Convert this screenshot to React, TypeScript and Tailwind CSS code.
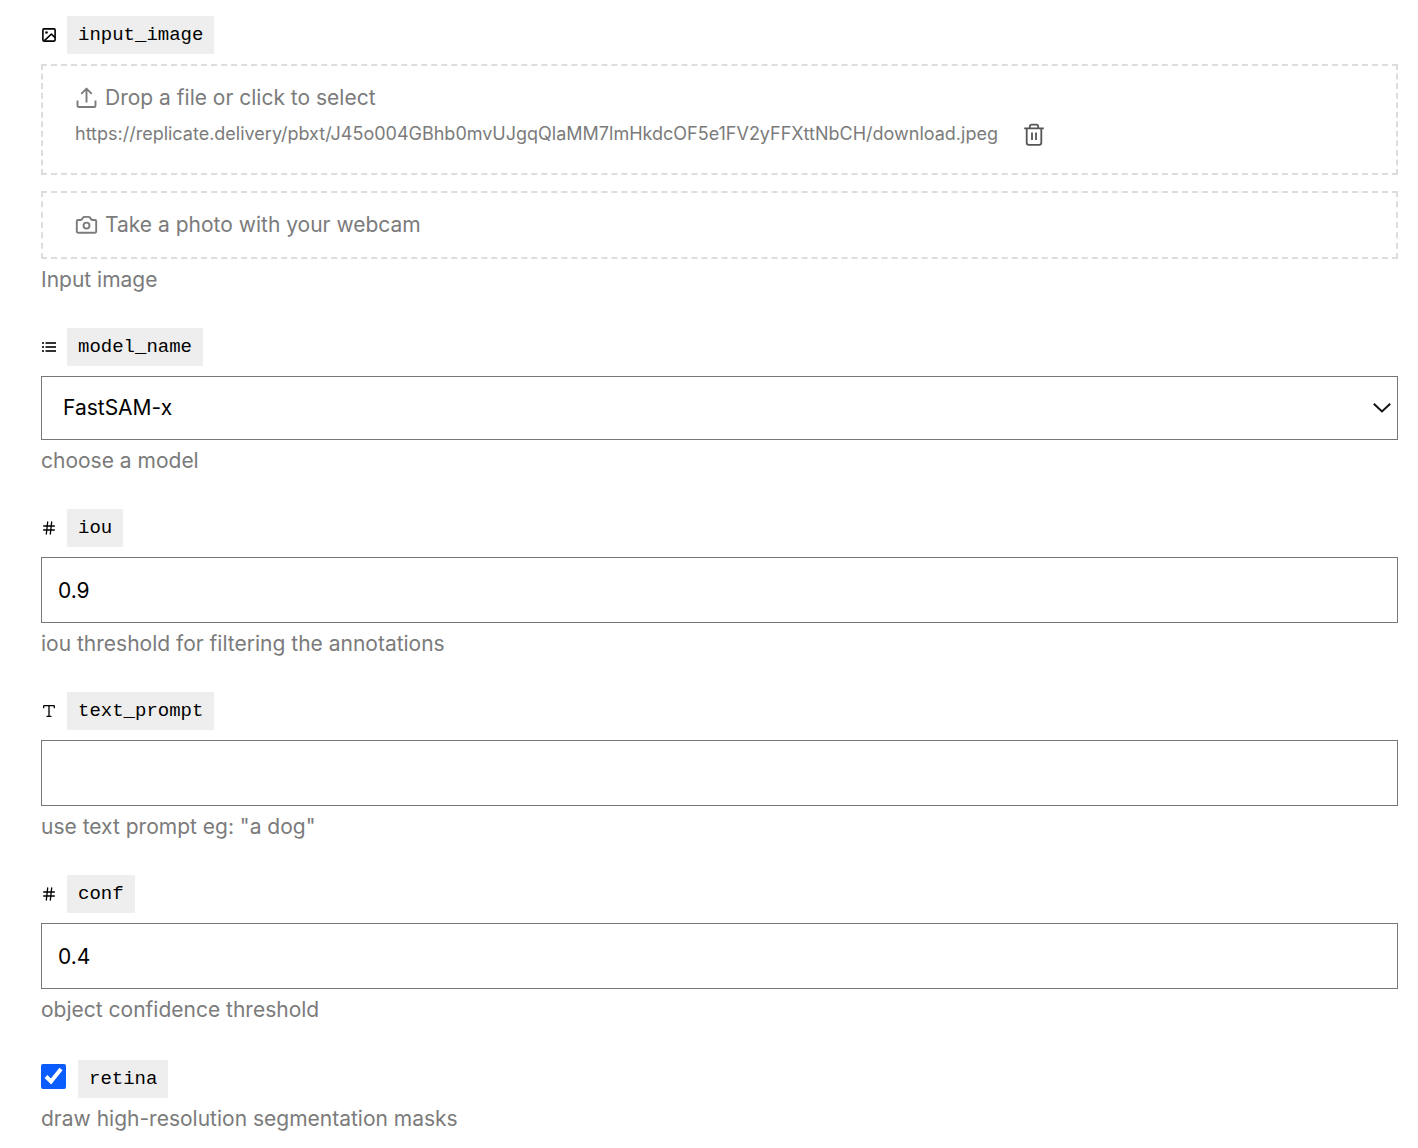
import { useState } from "react";
import type { ReactNode } from "react";
import { Hash, Type } from "lucide-react";

function ImageIcon() {
  return (
    <svg className="size-4 text-black" viewBox="0 0 16 16" fill="none" stroke="currentColor" strokeWidth="1.6" strokeLinejoin="round">
      <rect x="1.9" y="1.9" width="12.2" height="12.2" rx="1" />
      <circle cx="5.5" cy="5.5" r="1.3" fill="currentColor" stroke="none" />
      <path d="M3.4 13.6 10.4 7l3.6 3.6" />
    </svg>
  );
}

function ListIcon() {
  return (
    <svg className="size-4" viewBox="0 0 16 16" fill="none" stroke="#333" strokeWidth="1.8">
      <path d="M1 4h2M1 8h2M1 12h2M4.5 4H15M4.5 8H15M4.5 12H15" />
    </svg>
  );
}

function UploadIcon() {
  return (
    <svg className="size-6 shrink-0" viewBox="0 0 24 24" fill="none" stroke="currentColor" strokeWidth="1.9" strokeLinejoin="round">
      <path d="M2.5 14.5v5.2A1.3 1.3 0 0 0 3.8 21h15.4a1.3 1.3 0 0 0 1.3-1.3v-5.2" />
      <path d="M11.5 16.5V3M6.3 7.8l5.2-5.2 5.2 5.2" />
    </svg>
  );
}

function CameraIcon() {
  return (
    <svg className="size-6 shrink-0" viewBox="0 0 24 24" fill="none" stroke="currentColor" strokeWidth="1.9" strokeLinejoin="round">
      <path d="M1.8 8.2A1.2 1.2 0 0 1 3 7h2.3c.8 0 1.3-.3 1.7-.9l.9-1.3c.4-.6.9-.9 1.6-.9h4c.7 0 1.2.3 1.6.9l.9 1.3c.4.6.9.9 1.7.9H20a1.2 1.2 0 0 1 1.2 1.2v10.4A1.2 1.2 0 0 1 20 19.8H3a1.2 1.2 0 0 1-1.2-1.2z" />
      <circle cx="11.5" cy="12.6" r="3" />
    </svg>
  );
}

function TrashIcon() {
  return (
    <svg className="size-6" viewBox="0 0 24 24" fill="none" stroke="currentColor" strokeWidth="1.8" strokeLinejoin="round">
      <path d="M2.2 6.4h19.6M4.7 6.4v14.4a2 2 0 0 0 2 2h10.6a2 2 0 0 0 2-2V6.4M7.8 6.4V4.6a2 2 0 0 1 2-2h4.4a2 2 0 0 1 2 2v1.8" />
      <path d="M10 10.6v7.4M14 10.6v7.4" />
    </svg>
  );
}

function Chip({ children }: { children: string }) {
  return (
    <code className="bg-[#eee] px-[11px] font-['Liberation_Mono',monospace] text-[19px] leading-[38px] text-black">
      {children}
    </code>
  );
}

function Field({ id, icon, help, children }: { id: string; icon: ReactNode; help: string; children: ReactNode }) {
  return (
    <div>
      <label className="mb-2.5 flex items-center gap-2.5" htmlFor={id}>
        <span className="flex w-4 justify-center">{icon}</span>
        <Chip>{id}</Chip>
      </label>
      {children}
      <p className="mt-[5px] leading-8">{help}</p>
    </div>
  );
}

const inputClass = "block h-[66px] w-full border border-[#777] bg-white px-4 text-black outline-none";

export default function App() {
  const [fileUrl, setFileUrl] = useState(
    "https://replicate.delivery/pbxt/J45o004GBhb0mvUJgqQlaMM7lmHkdcOF5e1FV2yFFXttNbCH/download.jpeg"
  );
  const [retina, setRetina] = useState(true);

  return (
    <form className="grid gap-8 bg-white pt-4 pr-5 pb-3 pl-[41px] font-[Inter,sans-serif] text-[21px] text-[#7b7b7b]">
      <Field help="Input image" icon={<ImageIcon />} id="input_image">
        <div className="border-2 border-dashed border-[#ddd] px-8 pt-4 pb-[23px]">
          <label className="flex h-8 cursor-pointer items-center gap-1.5">
            <UploadIcon />
            Drop a file or click to select
            <input className="sr-only" id="input_image" type="file" />
          </label>
          {fileUrl ? (
            <div className="mt-1 flex h-8 items-center gap-6">
              <span className="text-lg">{fileUrl}</span>
              <button aria-label="Remove file" className="text-[#555]" onClick={() => setFileUrl("")} type="button">
                <TrashIcon />
              </button>
            </div>
          ) : null}
        </div>
        <button className="mt-4 flex w-full items-center gap-1.5 border-2 border-dashed border-[#ddd] px-8 py-4 leading-8" type="button">
          <CameraIcon />
          Take a photo with your webcam
        </button>
      </Field>

      <Field help="choose a model" icon={<ListIcon />} id="model_name">
        <div className="relative">
          <select className="block h-16 w-full appearance-none border border-[#777] bg-white px-[21px] text-black outline-none" id="model_name">
            <option>FastSAM-x</option>
            <option>FastSAM-s</option>
          </select>
          <svg className="pointer-events-none absolute top-1/2 right-1.5 h-3 w-5 -translate-y-1/2" viewBox="0 0 20 12" fill="none" stroke="#111" strokeWidth="2">
            <path d="M1.8 1.8 10 9.4l8.2-7.6" />
          </svg>
        </div>
      </Field>

      <Field help="iou threshold for filtering the annotations" icon={<Hash className="size-4 text-black" />} id="iou">
        <input className={inputClass} defaultValue="0.9" id="iou" type="text" />
      </Field>

      <Field help={'use text prompt eg: "a dog"'} icon={<Type className="size-4 text-black" />} id="text_prompt">
        <input className={inputClass} id="text_prompt" type="text" />
      </Field>

      <Field help="object confidence threshold" icon={<Hash className="size-4 text-black" />} id="conf">
        <input className={inputClass} defaultValue="0.4" id="conf" type="text" />
      </Field>

      <div>
        <div className="flex h-10 items-end gap-3">
          <input
            checked={retina}
            className="mb-[9px] size-[25px] accent-[#0a5cff]"
            id="retina"
            onChange={(e) => setRetina(e.target.checked)}
            type="checkbox"
          />
          <label className="flex" htmlFor="retina">
            <Chip>retina</Chip>
          </label>
        </div>
        <p className="mt-[5px] leading-8">draw high-resolution segmentation masks</p>
      </div>
    </form>
  );
}
